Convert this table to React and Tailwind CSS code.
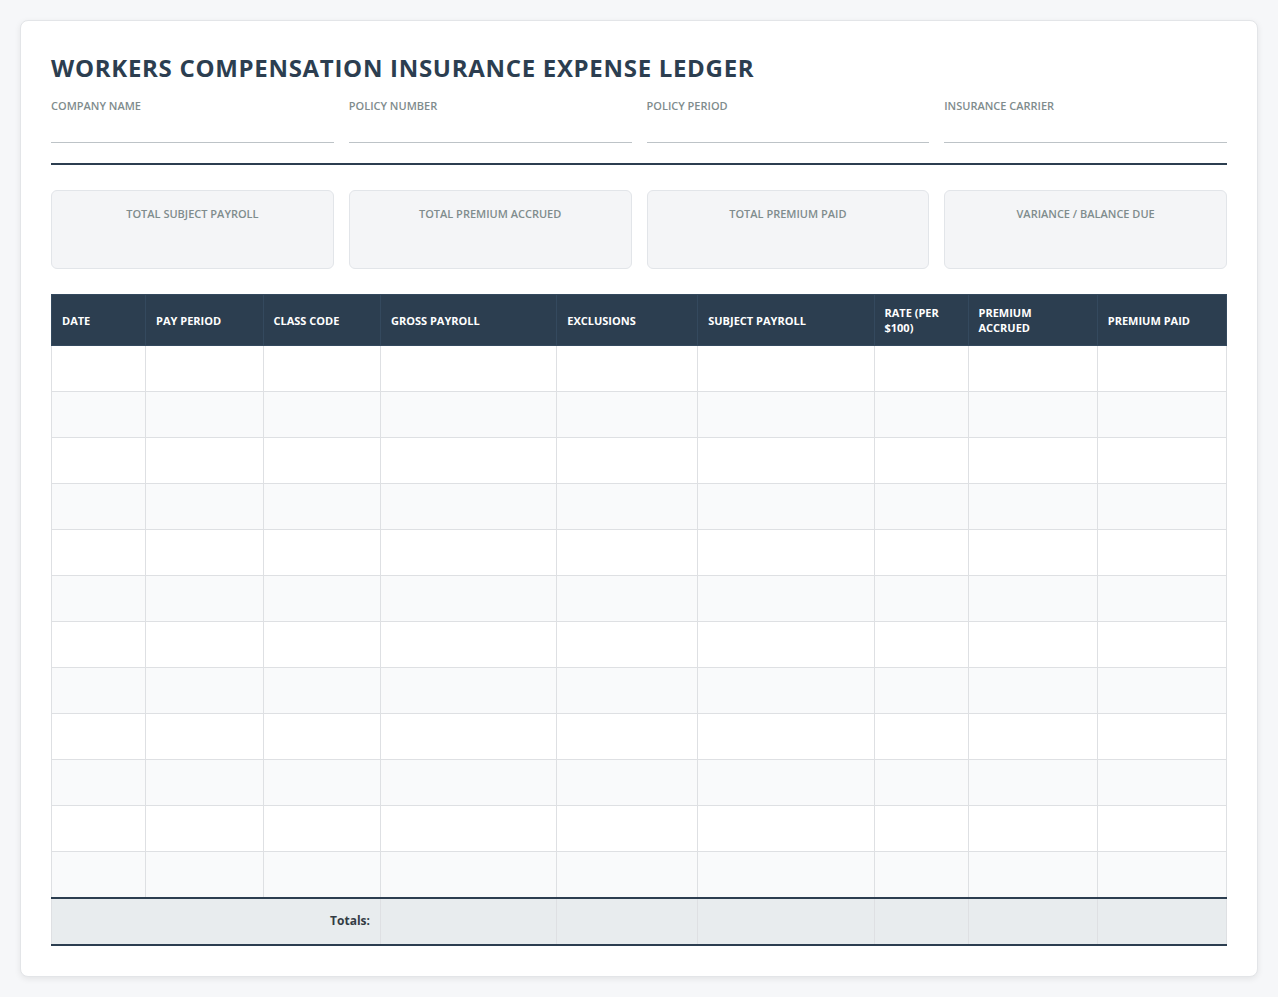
import React from "react";

const fields = ["Company Name", "Policy Number", "Policy Period", "Insurance Carrier"];
const summary = ["Total Subject Payroll", "Total Premium Accrued", "Total Premium Paid", "Variance / Balance Due"];
const columns = [
  { label: "Date", w: "w-[8%]" },
  { label: "Pay Period", w: "w-[10%]" },
  { label: "Class Code", w: "w-[10%]" },
  { label: "Gross Payroll", w: "w-[15%]" },
  { label: "Exclusions", w: "w-[12%]" },
  { label: "Subject Payroll", w: "w-[15%]" },
  { label: "Rate (per $100)", w: "w-[8%]" },
  { label: "Premium Accrued", w: "w-[11%]" },
  { label: "Premium Paid", w: "w-[11%]" },
];
const rows = Array.from({ length: 12 });

const App = () => {
  return (
    <div className="min-h-screen w-full bg-[#f6f7f9] p-5 font-['Open_Sans',sans-serif]">
      <div className="bg-white rounded-lg border border-[#e3e5e8] shadow-[0_2px_6px_rgba(0,0,0,0.08)] px-[30px] pt-[32px] pb-[30px]">
        <div className="border-b-2 border-[#2c3e50] pb-5 mb-[25px]">
          <h1 className="text-[24px] leading-[29px] font-bold uppercase tracking-[0.7px] text-[#2c3e50] mb-4">
            Workers Compensation Insurance Expense Ledger
          </h1>
          <div className="grid grid-cols-4 gap-[15px]">
            {fields.map((f) => (
              <div key={f}>
                <div className="text-[11px] leading-4 font-semibold uppercase text-[#7f8c8d]">{f}</div>
                <div className="h-[29px] border-b border-[#bdc3c7]"></div>
              </div>
            ))}
          </div>
        </div>

        <div className="grid grid-cols-4 gap-[15px] mb-[25px]">
          {summary.map((s) => (
            <div key={s} className="h-[79px] bg-[#f4f5f7] border border-[#e2e5e9] rounded-md pt-[15px] px-[14px] text-center">
              <div className="text-[11px] leading-4 font-semibold uppercase text-[#7f8c8d]">{s}</div>
            </div>
          ))}
        </div>

        <table className="w-full border-collapse table-fixed">
          <thead>
            <tr className="bg-[#2c3e50] text-white h-[51px]">
              {columns.map((c) => (
                <th
                  key={c.label}
                  className={`${c.w} border border-[#34495e] pl-[10px] pr-[14px] py-[7px] text-left align-middle text-[11px] leading-[15px] font-bold uppercase`}
                >
                  {c.label}
                </th>
              ))}
            </tr>
          </thead>
          <tbody>
            {rows.map((_, i) => (
              <tr key={i} className={`h-[46px] ${i % 2 === 1 ? "bg-[#f9fafb]" : "bg-white"}`}>
                {columns.map((c) => (
                  <td key={c.label} className="border border-[#dee0e3]"></td>
                ))}
              </tr>
            ))}
          </tbody>
          <tfoot>
            <tr className="h-[47px] bg-[#e8ecee] border-t-2 border-b-2 border-[#2c3e50]">
              <td colSpan={3} className="border-x border-[#dee0e3] pr-[10px] text-right text-[12px] font-bold text-[#333b44]">
                Totals:
              </td>
              {columns.slice(3).map((c) => (
                <td key={c.label} className="border-x border-[#dee0e3]"></td>
              ))}
            </tr>
          </tfoot>
        </table>
      </div>
    </div>
  );
};

export default App;
